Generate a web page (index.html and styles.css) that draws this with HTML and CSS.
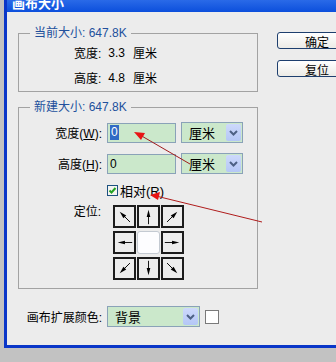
FILE: index.html
```html
<!DOCTYPE html>
<html lang="zh-CN">
<head>
  <meta charset="UTF-8" />
  <title>画布大小</title>
  <link rel="stylesheet" href="styles.css">
</head>
<body>
  <div class="window">
    <div class="titlebar"><span>画布大小</span></div>
    <div class="content">
      <div class="left">
        <fieldset class="group current">
          <legend>当前大小: 647.8K</legend>
          <div class="info"><span>宽度:</span><span class="val">3.3</span><span class="unit">厘米</span></div>
          <div class="info"><span>高度:</span><span class="val">4.8</span><span class="unit">厘米</span></div>
        </fieldset>

        <fieldset class="group newsize">
          <legend>新建大小: 647.8K</legend>
          <div class="row">
            <label class="label">宽度(<u>W</u>):</label>
            <div class="field"><span class="sel">0</span></div>
            <div class="select small"><span class="text">厘米</span><span class="drop"><svg width="9" height="6" viewBox="0 0 9 6"><path d="M1 1 L4.5 4.5 L8 1" fill="none" stroke="#4d6185" stroke-width="2"/></svg></span></div>
          </div>
          <div class="row">
            <label class="label">高度(<u>H</u>):</label>
            <div class="field">0</div>
            <div class="select small"><span class="text">厘米</span><span class="drop"><svg width="9" height="6" viewBox="0 0 9 6"><path d="M1 1 L4.5 4.5 L8 1" fill="none" stroke="#4d6185" stroke-width="2"/></svg></span></div>
          </div>
          <div class="row check-row">
            <span class="check"><svg width="9" height="9" viewBox="0 0 9 9"><path d="M1.5 4.5 L3.5 6.5 L7.5 2" fill="none" stroke="#21a121" stroke-width="2"/></svg></span>
            <span>相对(R)</span>
          </div>
          <div class="row anchor-row">
            <span class="label">定位:</span>
            <div class="anchor">
              <div class="cell"><svg viewBox="0 0 21 21"><g transform="rotate(-45 10.5 10.5)"><line x1="10.5" y1="19" x2="10.5" y2="8" stroke="#000"/><path d="M10.5 3 L8.3 11 L12.7 11 Z"/></g></svg></div>
              <div class="cell"><svg viewBox="0 0 21 21"><line x1="10.5" y1="19" x2="10.5" y2="8" stroke="#000"/><path d="M10.5 3 L8.5 11 L12.5 11 Z"/></svg></div>
              <div class="cell"><svg viewBox="0 0 21 21"><g transform="rotate(45 10.5 10.5)"><line x1="10.5" y1="19" x2="10.5" y2="8" stroke="#000"/><path d="M10.5 3 L8.3 11 L12.7 11 Z"/></g></svg></div>
              <div class="cell"><svg viewBox="0 0 21 21"><g transform="rotate(-90 10.5 10.5)"><line x1="10.5" y1="19" x2="10.5" y2="8" stroke="#000"/><path d="M10.5 3 L8.5 11 L12.5 11 Z"/></g></svg></div>
              <div class="cell center"></div>
              <div class="cell"><svg viewBox="0 0 21 21"><g transform="rotate(90 10.5 10.5)"><line x1="10.5" y1="19" x2="10.5" y2="8" stroke="#000"/><path d="M10.5 3 L8.5 11 L12.5 11 Z"/></g></svg></div>
              <div class="cell"><svg viewBox="0 0 21 21"><g transform="rotate(-135 10.5 10.5)"><line x1="10.5" y1="19" x2="10.5" y2="8" stroke="#000"/><path d="M10.5 3 L8.3 11 L12.7 11 Z"/></g></svg></div>
              <div class="cell"><svg viewBox="0 0 21 21"><g transform="rotate(180 10.5 10.5)"><line x1="10.5" y1="19" x2="10.5" y2="8" stroke="#000"/><path d="M10.5 3 L8.5 11 L12.5 11 Z"/></g></svg></div>
              <div class="cell"><svg viewBox="0 0 21 21"><g transform="rotate(135 10.5 10.5)"><line x1="10.5" y1="19" x2="10.5" y2="8" stroke="#000"/><path d="M10.5 3 L8.3 11 L12.7 11 Z"/></g></svg></div>
            </div>
          </div>
        </fieldset>

        <div class="row canvas-row">
          <span class="label">画布扩展颜色:</span>
          <div class="select wide"><span class="text">背景</span><span class="drop"><svg width="9" height="6" viewBox="0 0 9 6"><path d="M1 1 L4.5 4.5 L8 1" fill="none" stroke="#4d6185" stroke-width="2"/></svg></span></div>
          <span class="swatch"></span>
        </div>
      </div>

      <div class="buttons">
        <button>确定</button>
        <button>复位</button>
      </div>
    </div>
  </div>

  <!-- red annotation arrows drawn over the dialog -->
  <svg class="marks" width="336" height="362" viewBox="0 0 336 362">
    <line x1="190" y1="164" x2="140" y2="135" stroke="#a01c1c" stroke-width="1"/>
    <path d="M134 132 L145 133 L141 140 Z" fill="#e81414"/>
    <line x1="262" y1="222" x2="156" y2="196" stroke="#b01c1c" stroke-width="1"/>
    <path d="M150 195 L160 192 L158 200 Z" fill="#e81414"/>
  </svg>
</body>
</html>
```

FILE: styles.css
```css
* {
  margin: 0;
  padding: 0;
  box-sizing: border-box;
}

body {
  background: #c2c2c2;
  font-family: 'Liberation Sans', 'Noto Sans CJK SC', sans-serif;
  font-size: 12px;
  color: #000;
  width: 336px;
  height: 362px;
  overflow: hidden;
}

.window {
  margin-left: 4px;
  width: 340px;
  border-left: 3px solid #0a36c8;
  border-bottom: 3px solid #0a36c8;
}

.titlebar {
  height: 12px;
  overflow: hidden;
  background: linear-gradient(to bottom, #2a6ae8, #0c4fdc);
  color: #fff;
  font-weight: bold;
  font-size: 13px;
  padding-left: 5px;
}

.titlebar span {
  display: block;
  margin-top: -4px;
  line-height: 16px;
}

.content {
  background: #ececec;
  height: 333px;
  display: flex;
  gap: 19px;
  padding: 14px 0 0 11px;
}

.left {
  width: 240px;
  flex-shrink: 0;
}

.group {
  border: 1px solid #a2a2a2;
  min-width: 0;
}

.group legend {
  margin-left: 11px;
  padding: 0 4px;
  line-height: 14px;
  color: #22509c;
}

.current {
  padding: 0 0 1px 0;
}

.info {
  height: 25px;
  display: flex;
  align-items: center;
  padding-left: 55px;
}

.info .val {
  margin-left: 7px;
}

.info .unit {
  margin-left: 8px;
}

.newsize {
  margin-top: 8px;
  padding: 8px 0 8px 0;
}

.row {
  display: flex;
  align-items: center;
  gap: 5px;
}

.row + .row {
  margin-top: 10px;
}

.label {
  width: 83px;
  text-align: right;
}

.field {
  width: 69px;
  height: 20px;
  border: 1px solid #8aa2b8;
  background: #cbe8cb;
  padding-left: 2px;
  display: flex;
  align-items: center;
}

.field .sel {
  background: #316ac5;
  color: #fff;
  padding: 0 1px;
  line-height: 15px;
}

.select {
  height: 21px;
  border: 1px solid #8aa2b8;
  background: #cbe8cb;
  display: flex;
  align-items: center;
  justify-content: space-between;
  padding: 1px;
}

.select.small {
  width: 62px;
}

.select.wide {
  width: 93px;
}

.select .text {
  padding-left: 6px;
  font-size: 13px;
}

.select .drop {
  width: 15px;
  height: 17px;
  background: linear-gradient(to bottom, #cdd9fb, #b4c7f6);
  border-radius: 2px;
  display: flex;
  align-items: center;
  justify-content: center;
}

.check-row {
  padding-left: 88px;
  gap: 2px;
  height: 12px;
}

.check-row span:last-child {
  font-size: 13px;
}

.check {
  width: 11px;
  height: 11px;
  border: 1px solid #1c5180;
  background: #f4f4f0;
  display: flex;
  align-items: center;
  justify-content: center;
}

.anchor-row {
  align-items: flex-start;
  gap: 12px;
}

.row.anchor-row {
  margin-top: 9px;
}

.anchor-row .label {
  width: 82px;
  line-height: 14px;
}

.anchor {
  display: grid;
  grid-template-columns: repeat(3, 23px);
  grid-template-rows: repeat(3, 23px);
  column-gap: 1px;
  row-gap: 3px;
}

.cell {
  border: 2px solid #1c1c1c;
  background: #ededed;
}

.cell svg {
  display: block;
  width: 19px;
  height: 19px;
}

.cell.center {
  border: 1px solid #c4cad2;
  border-radius: 3px;
  background: #fdfdff;
}

.canvas-row {
  margin-top: 17px;
}

.row.canvas-row .label {
  width: 84px;
}

.swatch {
  width: 14px;
  height: 14px;
  border: 1px solid #7a7a7a;
  background: #fff;
}

.buttons {
  display: flex;
  flex-direction: column;
  gap: 11px;
  padding-top: 6px;
}

button {
  width: 80px;
  height: 17px;
  border: 1px solid #1e3f6e;
  border-radius: 3px;
  background: linear-gradient(to bottom, #ffffff, #ecebe6);
  font-family: 'Liberation Sans', 'Noto Sans CJK SC', sans-serif;
  font-size: 12px;
  color: #000;
}

.marks {
  position: absolute;
  left: 0;
  top: 0;
}
```
